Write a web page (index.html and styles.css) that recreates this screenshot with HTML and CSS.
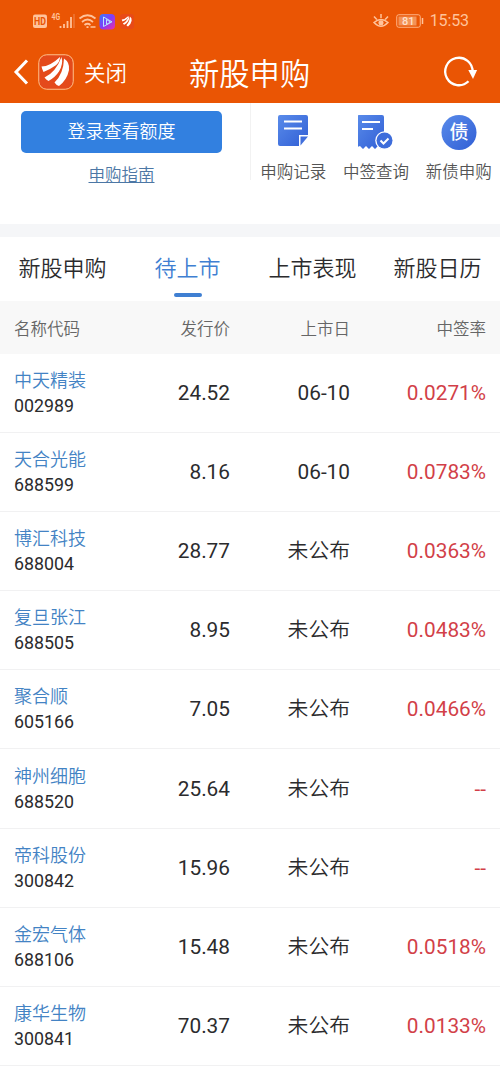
FILE: index.html
```html
<!DOCTYPE html>
<html lang="zh-CN">
<head>
<meta charset="utf-8">
<title>新股申购</title>
<link rel="stylesheet" href="styles.css">
</head>
<body>
<header class="top">
  <div class="status">
    <svg class="status-left" width="104" height="20" viewBox="0 0 104 20">
      <rect x="1" y="3.500" width="14" height="13.500" rx="2" fill="#ffc39b"/>
      <text x="2" y="14" class="hd" textLength="12" lengthAdjust="spacingAndGlyphs">HD</text>
      <text x="19.500" y="9" class="net" textLength="8.500" lengthAdjust="spacingAndGlyphs">4G</text>
      <path d="M28.500 17v-2M32 17v-4M35.500 17v-7M39 17V6" stroke="#ffc39b" stroke-width="1.800"/>
      <path d="M42 17V3" stroke="#f08a50" stroke-width="1"/>
      <g fill="none" stroke="#ffc39b" stroke-width="1.700">
        <path d="M47.500 7.500Q55.500 1 63.500 7.500M50 11Q55.500 6 61 11M52.500 14Q55.500 11.500 58.500 14"/>
        <path d="M54.500 16.200h2M58.500 16h5"/>
      </g>
      <defs>
        <linearGradient id="play" x1="0" y1="0" x2="1" y2="1"><stop offset="0" stop-color="#347bff"/><stop offset=".5" stop-color="#843df6"/><stop offset="1" stop-color="#f22da2"/></linearGradient>
        <g id="petals" fill="#fff">
          <path d="M3.500 12.500Q12 12.500 22 3Q22 8 17.500 11.500Q12 15.500 5.500 18Q4 15 3.500 12.500Z"/>
          <path d="M6.500 23.500Q18 18 23.500 3Q25.500 10 21 17.500Q17 23.500 10.500 27Q8 25.500 6.500 23.500Z"/>
          <path d="M16.500 28.500Q25.500 20 26 4.500Q32 8.500 31 16Q29 26 21 32Q18 31 16.500 28.500Z"/>
        </g>
      </defs>
      <rect x="67.500" y="3" width="15.500" height="15.500" rx="4" fill="url(#play)"/>
      <path d="M71.500 6v9.500l8.500-4.700zM74.500 8.500v5l4-2.500z" fill="none" stroke="#b8e5ff" stroke-width="1"/>
      <rect x="88" y="3" width="14" height="15" rx="3" fill="#e84a17"/>
      <use href="#petals" transform="translate(88.500 4) scale(.36)"/>
    </svg>
    <div class="status-right">
      <svg width="18" height="18" viewBox="0 0 18 18" fill="none" stroke="#ffc39b" stroke-width="1.500">
        <path d="M2 10.500Q9 4.500 16 10.500Q9 18 2 10.500zM9 6V2M4.800 7.500 2 4.500M13.200 7.500 16 4.500"/><circle cx="9" cy="10.800" r="1.800" fill="#ffc39b"/>
      </svg>
      <svg width="28" height="16" viewBox="0 0 28 16">
        <rect x=".75" y="1.750" width="23.500" height="12.500" rx="2" fill="none" stroke="#ffb587"/>
        <rect x="2.500" y="3.500" width="18" height="9" fill="#f39358"/>
        <path d="M26.500 5v6" stroke="#ffc39b" stroke-width="1.500"/>
        <text x="6" y="12" class="charge">81</text>
      </svg>
      <span class="clock">15:53</span>
    </div>
  </div>
  <div class="nav">
    <div class="nav-side">
      <svg width="16" height="28" viewBox="0 0 16 28" fill="none" stroke="#fff" stroke-width="3"><path d="M14 2.500 3 14l11 11.500"/></svg>
      <svg class="logo" width="36" height="36" viewBox="0 0 36 36">
        <rect x=".75" y=".75" width="34.500" height="34.500" rx="8" fill="#e44a1b" stroke="#ffc08a"/>
        <use href="#petals"/>
      </svg>
      <span class="close">关闭</span>
    </div>
    <h1 class="title">新股申购</h1>
    <svg class="refresh" width="36" height="34" viewBox="0 0 36 34">
      <path d="M26.500 26.300A13.700 13.700 0 1 1 30.600 17" fill="none" stroke="#fff" stroke-width="2.300"/>
      <path d="M26.300 15h8.800L31 24z" fill="#fff"/>
    </svg>
  </div>
</header>

<section class="actions">
  <div class="login">
    <a class="login-button">登录查看额度</a>
    <a class="guide">申购指南</a>
  </div>
  <nav class="shortcuts">
    <a class="shortcut">
      <svg width="36" height="36" viewBox="0 0 36 36">
        <defs><linearGradient id="blue" x1="0" y1="0" x2="1" y2="1"><stop offset="0" stop-color="#598bea"/><stop offset="1" stop-color="#315fd5"/></linearGradient></defs>
        <path d="M5 0h26q2 0 2 2v18h-9v11H5q-2 0-2-2V2q0-2 2-2z" fill="url(#blue)"/>
        <path d="M9 6.500h18M9 13.500h18" stroke="#fff" stroke-width="2"/>
        <path d="M25.500 21.500H33l-7.500 9z" fill="#416fdc"/>
      </svg>
      <span>申购记录</span>
    </a>
    <a class="shortcut">
      <svg width="36" height="36" viewBox="0 0 36 36">
        <path d="M2 0h22q2 0 2 2v30l-3 2-3-3-3 3-3-3-3 3-3-3-3 3-3-3-3 1V2q0-2 2-2z" fill="url(#blue)"/>
        <path d="M4 7h18M4 14h11" stroke="#fff" stroke-width="2"/>
        <circle cx="26.500" cy="25.500" r="9.300" fill="#fff"/><circle cx="26.500" cy="25.500" r="8" fill="#3e6ddb"/>
        <path d="m22.500 25.500 3 3 5-5" fill="none" stroke="#fff" stroke-width="2"/>
      </svg>
      <span>中签查询</span>
    </a>
    <a class="shortcut">
      <svg width="36" height="36" viewBox="0 0 36 36"><circle cx="18" cy="17.500" r="17.500" fill="url(#blue)"/><text x="18" y="24" text-anchor="middle" class="bond">债</text></svg>
      <span>新债申购</span>
    </a>
  </nav>
</section>

<nav class="tabs">
  <a class="tab">新股申购</a>
  <a class="tab active">待上市</a>
  <a class="tab">上市表现</a>
  <a class="tab">新股日历</a>
</nav>

<main class="list">
  <div class="row head"><span class="name-title">名称代码</span><span>发行价</span><span>上市日</span><span>中签率</span></div>
  <div class="row"><div class="stock"><b>中天精装</b><i>002989</i></div><span>24.52</span><span>06-10</span><span class="rate">0.0271%</span></div>
  <div class="row"><div class="stock"><b>天合光能</b><i>688599</i></div><span>8.16</span><span>06-10</span><span class="rate">0.0783%</span></div>
  <div class="row"><div class="stock"><b>博汇科技</b><i>688004</i></div><span>28.77</span><span class="pending">未公布</span><span class="rate">0.0363%</span></div>
  <div class="row"><div class="stock"><b>复旦张江</b><i>688505</i></div><span>8.95</span><span class="pending">未公布</span><span class="rate">0.0483%</span></div>
  <div class="row"><div class="stock"><b>聚合顺</b><i>605166</i></div><span>7.05</span><span class="pending">未公布</span><span class="rate">0.0466%</span></div>
  <div class="row"><div class="stock"><b>神州细胞</b><i>688520</i></div><span>25.64</span><span class="pending">未公布</span><span class="rate">--</span></div>
  <div class="row"><div class="stock"><b>帝科股份</b><i>300842</i></div><span>15.96</span><span class="pending">未公布</span><span class="rate">--</span></div>
  <div class="row"><div class="stock"><b>金宏气体</b><i>688106</i></div><span>15.48</span><span class="pending">未公布</span><span class="rate">0.0518%</span></div>
  <div class="row"><div class="stock"><b>康华生物</b><i>300841</i></div><span>70.37</span><span class="pending">未公布</span><span class="rate">0.0133%</span></div>
</main>
</body>
</html>
```
FILE: styles.css
```css
* { box-sizing: border-box; }
body {
  margin: 0;
  height: 1083px;
  overflow: hidden;
  background: #fff;
  color: #2b2b2d;
  font-family: Roboto, "Noto Sans CJK SC", sans-serif;
  font-weight: 400;
}
svg { display: block; flex: none; }
.close, .title, .login, .shortcuts, .tabs, .head, .stock b, .pending { font-weight: 350; }

/* Status and title bars */
.top { height: 103px; background: #ea5504; color: #fff; }
.status {
  height: 41px;
  padding: 0 31px 0 32px;
  display: flex;
  align-items: center;
  justify-content: space-between;
}
.status-right { display: flex; align-items: center; gap: 6px; }
.clock { font-size: 16px; line-height: 20px; color: #ffc39b; padding-top: 1px; letter-spacing: -.1px; }
.hd { font: 700 10px Roboto, sans-serif; fill: #ea5504; }
.net { font: 700 8.500px Roboto, sans-serif; fill: #ffc39b; }
.charge { font: 500 11px Roboto, sans-serif; fill: #ffe0cc; }
.nav {
  height: 62px;
  padding: 0 22px 0 13px;
  display: grid;
  grid-template-columns: 176px 1fr 36px;
  align-items: center;
}
.nav-side { display: flex; align-items: center; }
.logo { margin-left: 9px; }
.close { font-size: 21.500px; line-height: 32px; margin: 3px 0 0 10px; }
.title { margin: 5px 0 0; font-size: 30.300px; line-height: 44px; }

/* Account actions */
.actions {
  height: 134px;
  display: flex;
  border-bottom: 13px solid #f5f6f8;
}
.login {
  width: 251px;
  height: 77px;
  padding: 8px 28px 0 21px;
  border-right: 1px solid #f2f2f2;
  display: flex;
  flex-direction: column;
  align-items: center;
}
.login-button {
  width: 201px;
  height: 42px;
  border-radius: 5px;
  background: #3280e0;
  color: #fff;
  font-size: 18px;
  line-height: 42px;
  text-align: center;
}
.guide {
  margin-top: 10px;
  font-size: 16.500px;
  line-height: 25px;
  color: #4c77a5;
  text-decoration: underline;
  text-underline-offset: 1px;
}
.shortcuts { display: flex; padding: 12px 0 0 1px; }
.shortcut {
  width: 82.700px;
  display: flex;
  flex-direction: column;
  align-items: center;
  gap: 9px;
  font-size: 16.500px;
  line-height: 25px;
  color: #555;
}
.bond { font: 500 19px "Noto Sans CJK SC", sans-serif; fill: #fff; }

/* Listing tabs */
.tabs {
  height: 64px;
  display: grid;
  grid-template-columns: repeat(4, 1fr);
}
.tab {
  height: 60px;
  font-size: 22px;
  line-height: 64px;
  text-align: center;
}
.active { display: flex; flex-direction: column; align-items: center; color: #3f7fd2; }
.active::after { content: ""; width: 28px; height: 4px; margin-top: -8px; border-radius: 2px; background: #3f7fd2; }

/* Stock table */
.row {
  height: 79.200px;
  padding: 0 14px;
  display: grid;
  grid-template-columns: 1fr 90px 120px 136px;
  align-items: center;
  border-bottom: 1px solid #f1f1f2;
  font-size: 20.800px;
  line-height: 30px;
}
.row > span { text-align: right; }
.head {
  height: 52.500px;
  padding-top: 5px;
  background: #f8f8f8;
  color: #666;
  font-size: 16.500px;
  border: 0;
}
.row > .name-title { text-align: left; }
.stock b, .stock i { display: block; font-style: normal; font-size: 18px; line-height: 25px; }
.stock b { color: #4383c4; }
.stock i { font-size: 17.800px; }
.row .rate { color: #d23f48; }
```
